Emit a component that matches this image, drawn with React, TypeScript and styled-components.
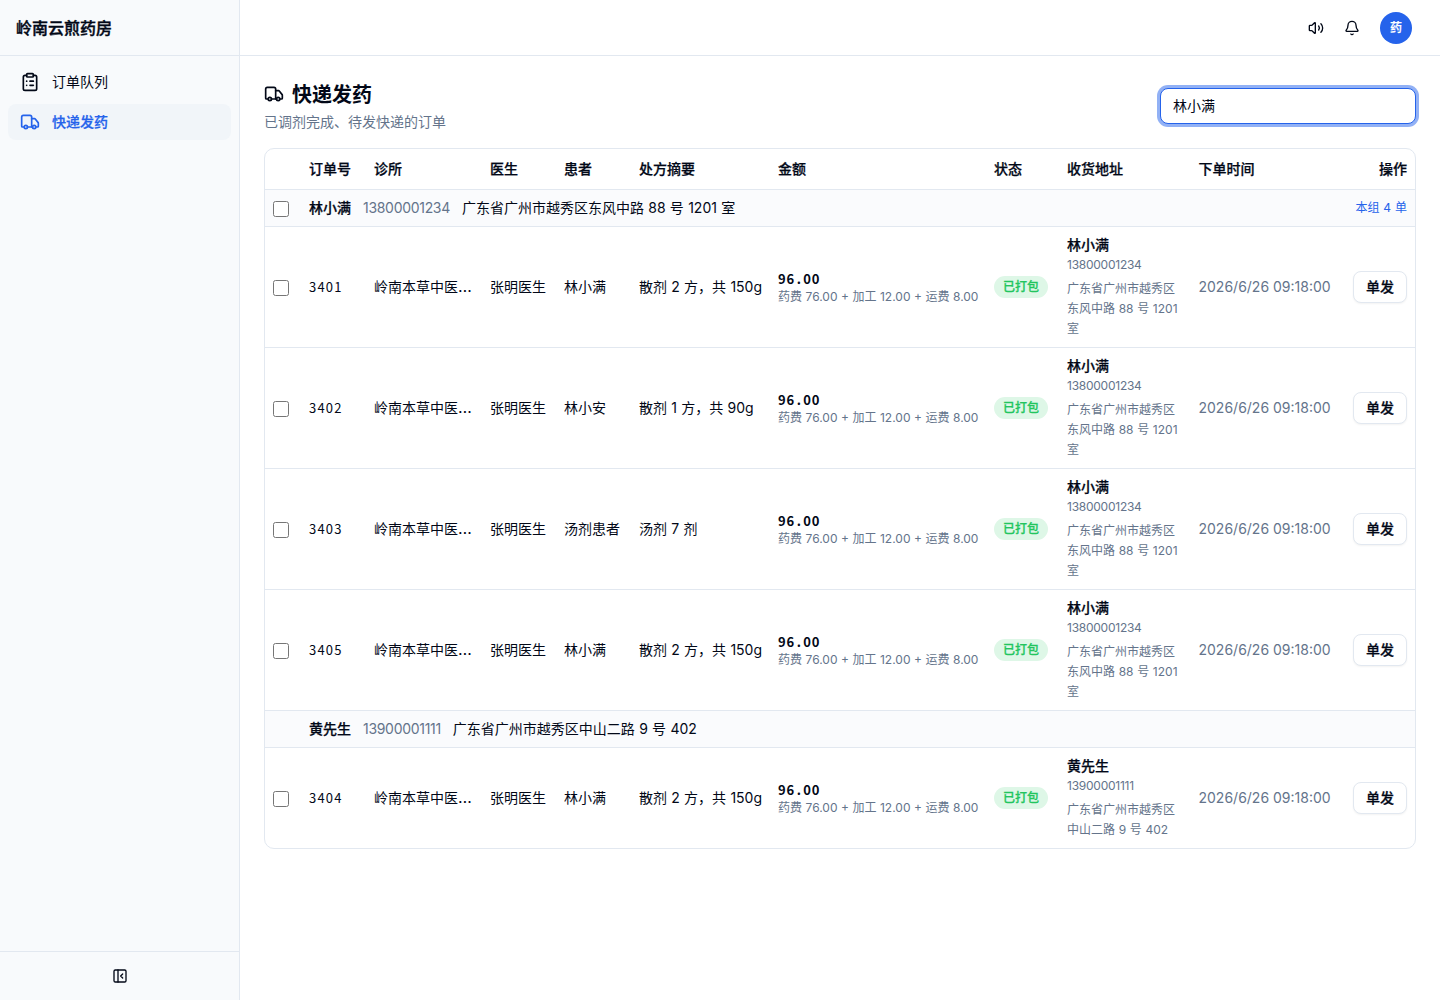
import React from 'react';
import styled, { createGlobalStyle, css } from 'styled-components';
import { Bell, ClipboardList, PanelLeftClose, Truck, Volume2 } from 'lucide-react';

const c = {
  ink: '#020817',
  muted: '#64748b',
  line: '#e2e8f0',
  primary: '#2563eb',
  side: '#f8fafc',
  accent: '#f1f5f9',
};

const medium = css`
  font-weight: 500;
  -webkit-text-stroke: 0.25px currentColor;
`;

const GlobalStyle = createGlobalStyle`
  *, *::before, *::after { box-sizing: border-box; }
  body {
    margin: 0;
    background: #fff;
    color: ${c.ink};
    font-family: Inter, 'Noto Sans CJK SC', sans-serif;
    font-size: 14px;
    line-height: 20px;
  }
  button, input { font: inherit; color: inherit; }
`;

const Shell = styled.div`
  display: grid;
  grid-template-columns: 240px minmax(0, 1fr);
  height: 100vh;
`;

const Sidebar = styled.aside`
  display: flex;
  flex-direction: column;
  background: ${c.side};
  border-right: 1px solid ${c.line};
`;

const Brand = styled.div`
  display: flex;
  align-items: center;
  height: 56px;
  padding: 0 16px;
  border-bottom: 1px solid ${c.line};
  font-size: 16px;
  ${medium}
  -webkit-text-stroke-width: 0.4px;
`;

const Nav = styled.nav`
  display: flex;
  flex: 1;
  flex-direction: column;
  gap: 4px;
  padding: 8px;
`;

const NavItem = styled.a<{ $active?: boolean }>`
  display: flex;
  align-items: center;
  gap: 12px;
  height: 36px;
  padding: 0 12px;
  border-radius: 8px;
  ${p => p.$active && css`
    background: ${c.accent};
    color: ${c.primary};
    ${medium}
  `}
`;

const SideFooter = styled.div`
  display: flex;
  align-items: center;
  justify-content: center;
  height: 49px;
  border-top: 1px solid ${c.line};
`;

const Page = styled.div`
  display: flex;
  flex-direction: column;
`;

const TopBar = styled.header`
  display: flex;
  align-items: center;
  justify-content: flex-end;
  gap: 20px;
  height: 56px;
  padding: 0 28px;
  border-bottom: 1px solid ${c.line};
`;

const Avatar = styled.div`
  display: flex;
  align-items: center;
  justify-content: center;
  width: 32px;
  height: 32px;
  border-radius: 50%;
  background: ${c.primary};
  color: #fff;
  font-size: 12px;
  ${medium}
`;

const Main = styled.main`
  display: flex;
  flex-direction: column;
  gap: 16px;
  padding: 24px;
`;

const Heading = styled.div`
  display: flex;
  align-items: center;
  justify-content: space-between;
`;

const Title = styled.h1`
  display: flex;
  align-items: center;
  gap: 8px;
  margin: 0;
  font-size: 20px;
  font-weight: 600;
  line-height: 28px;
`;

const TitleText = styled.span`
  padding-top: 2px;
  line-height: 26px;
`;

const Subtitle = styled.p`
  margin: 4px 0 0;
  color: ${c.muted};
`;

const Search = styled.input`
  width: 256px;
  height: 36px;
  padding: 0 12px 2px;
  border: 1px solid ${c.primary};
  border-radius: 8px;
  outline: none;
  background: #fff;
  box-shadow: 0 0 0 3px rgba(37, 99, 235, 0.5);
`;

const Card = styled.div`
  overflow: hidden;
  border: 1px solid ${c.line};
  border-radius: 10px;
`;

const Table = styled.table`
  width: 100%;
  table-layout: fixed;
  border-spacing: 0;
`;

const Col = styled.col<{ $w?: number }>`
  ${p => p.$w && `width: ${p.$w}px;`}
`;

const Th = styled.th<{ $end?: boolean }>`
  height: 41px;
  padding: 0 8px;
  border-bottom: 1px solid ${c.line};
  ${medium}
  text-align: ${p => (p.$end ? 'right' : 'left')};
`;

const Td = styled.td<{ $muted?: boolean; $end?: boolean }>`
  padding: 8px;
  border-bottom: 1px solid ${c.line};
  color: ${p => (p.$muted ? c.muted : 'inherit')};
  text-align: ${p => (p.$end ? 'right' : 'left')};
  white-space: nowrap;
  vertical-align: middle;
`;

const Row = styled.tr`
  &:last-child > td { border-bottom: 0; }
`;

const GroupRow = styled.tr`
  background: #fafbfd;
`;

const Check = styled.input.attrs({ type: 'checkbox' })`
  display: block;
  width: 16px;
  height: 16px;
  margin: 2px 0 0;
`;

const GroupLine = styled.div`
  display: flex;
  align-items: center;
  gap: 12px;
  height: 20px;
`;

const Strong = styled.div`
  ${medium}
`;

const Phone = styled.span`
  color: ${c.muted};
  letter-spacing: -0.3px;
`;

const Spaced = styled.span`
  word-spacing: 0.35px;
`;

const Count = styled.div`
  color: ${c.primary};
  font-size: 12px;
  line-height: 20px;
  word-spacing: 0.5px;
`;

const OrderNo = styled.div`
  font-family: 'Noto Sans CJK SC', monospace;
  font-size: 13px;
  letter-spacing: 1.2px;
`;

const Dots = styled.span`
  font-size: 16px;
  line-height: 1;
`;

const Amount = styled.div`
  font-family: 'Noto Sans CJK SC', monospace;
  font-size: 13px;
  font-weight: 700;
  letter-spacing: 0.8px;
`;

const Point = styled.span`
  display: inline-block;
  width: 8.4px;
  text-align: center;
`;

const Breakdown = styled.div`
  color: ${c.muted};
  font-size: 12px;
  line-height: 16px;
  word-spacing: 0.15px;
`;

const Badge = styled.span`
  display: inline-flex;
  align-items: center;
  height: 22px;
  padding: 0 9px;
  border-radius: 11px;
  background: #def7e7;
  color: #22c55e;
  font-size: 12px;
  ${medium}
  vertical-align: middle;
`;

const SmallPhone = styled.div`
  color: ${c.muted};
  font-size: 12px;
  letter-spacing: -0.25px;
`;

const Address = styled.div`
  margin-top: 4px;
  color: ${c.muted};
  font-size: 12px;
  white-space: normal;
  word-spacing: 0.3px;
`;

const Send = styled.button`
  height: 32px;
  padding: 0 12px;
  border: 1px solid ${c.line};
  border-radius: 8px;
  background: #fff;
  box-shadow: 0 1px 2px rgba(0, 0, 0, 0.05);
  ${medium}
  vertical-align: middle;
`;

type Order = { id: string; patient: string; summary: string };
type Group = { name: string; phone: string; address: string; count?: number; orders: Order[] };

const groups: Group[] = [
  {
    name: '林小满',
    phone: '13800001234',
    address: '广东省广州市越秀区东风中路 88 号 1201 室',
    count: 4,
    orders: [
      { id: '3401', patient: '林小满', summary: '散剂 2 方，共 150g' },
      { id: '3402', patient: '林小安', summary: '散剂 1 方，共 90g' },
      { id: '3403', patient: '汤剂患者', summary: '汤剂 7 剂' },
      { id: '3405', patient: '林小满', summary: '散剂 2 方，共 150g' },
    ],
  },
  {
    name: '黄先生',
    phone: '13900001111',
    address: '广东省广州市越秀区中山二路 9 号 402',
    orders: [{ id: '3404', patient: '林小满', summary: '散剂 2 方，共 150g' }],
  },
];

const widths = [36, 65, 116, 74, 75, 139, 216, 73, 131.5, 148, undefined];
const headers = ['', '订单号', '诊所', '医生', '患者', '处方摘要', '金额', '状态', '收货地址', '下单时间'];

function OrderRow({ order, group }: { order: Order; group: Group }) {
  return (
    <Row>
      <Td><Check /></Td>
      <Td><OrderNo>{order.id}</OrderNo></Td>
      <Td>岭南本草中医<Dots>…</Dots></Td>
      <Td>张明医生</Td>
      <Td>{order.patient}</Td>
      <Td><Spaced>{order.summary}</Spaced></Td>
      <Td>
        <Amount>96<Point>.</Point>00</Amount>
        <Breakdown>药费 76.00 + 加工 12.00 + 运费 8.00</Breakdown>
      </Td>
      <Td><Badge>已打包</Badge></Td>
      <Td>
        <Strong>{group.name}</Strong>
        <SmallPhone>{group.phone}</SmallPhone>
        <Address>{group.address}</Address>
      </Td>
      <Td $muted>2026/6/26 09:18:00</Td>
      <Td $end><Send>单发</Send></Td>
    </Row>
  );
}

export default function App() {
  return (
    <Shell>
      <GlobalStyle />
      <Sidebar>
        <Brand>岭南云煎药房</Brand>
        <Nav>
          <NavItem><ClipboardList size={20} />订单队列</NavItem>
          <NavItem $active><Truck size={20} />快递发药</NavItem>
        </Nav>
        <SideFooter><PanelLeftClose size={16} /></SideFooter>
      </Sidebar>
      <Page>
        <TopBar>
          <Volume2 size={16} />
          <Bell size={16} />
          <Avatar>药</Avatar>
        </TopBar>
        <Main>
          <Heading>
            <div>
              <Title><Truck size={20} /><TitleText>快递发药</TitleText></Title>
              <Subtitle>已调剂完成、待发快递的订单</Subtitle>
            </div>
            <Search defaultValue="林小满" />
          </Heading>
          <Card>
            <Table>
              <colgroup>{widths.map((w, i) => <Col key={i} $w={w} />)}</colgroup>
              <thead>
                <tr>
                  {headers.map(h => <Th key={h}>{h}</Th>)}
                  <Th $end>操作</Th>
                </tr>
              </thead>
              <tbody>
                {groups.map(g => (
                  <React.Fragment key={g.name}>
                    <GroupRow>
                      <Td>{g.count && <Check />}</Td>
                      <Td colSpan={8}>
                        <GroupLine>
                          <Strong>{g.name}</Strong>
                          <Phone>{g.phone}</Phone>
                          <Spaced>{g.address}</Spaced>
                        </GroupLine>
                      </Td>
                      <Td colSpan={2} $end>{g.count && <Count>本组 {g.count} 单</Count>}</Td>
                    </GroupRow>
                    {g.orders.map(o => <OrderRow key={o.id} order={o} group={g} />)}
                  </React.Fragment>
                ))}
              </tbody>
            </Table>
          </Card>
        </Main>
      </Page>
    </Shell>
  );
}
